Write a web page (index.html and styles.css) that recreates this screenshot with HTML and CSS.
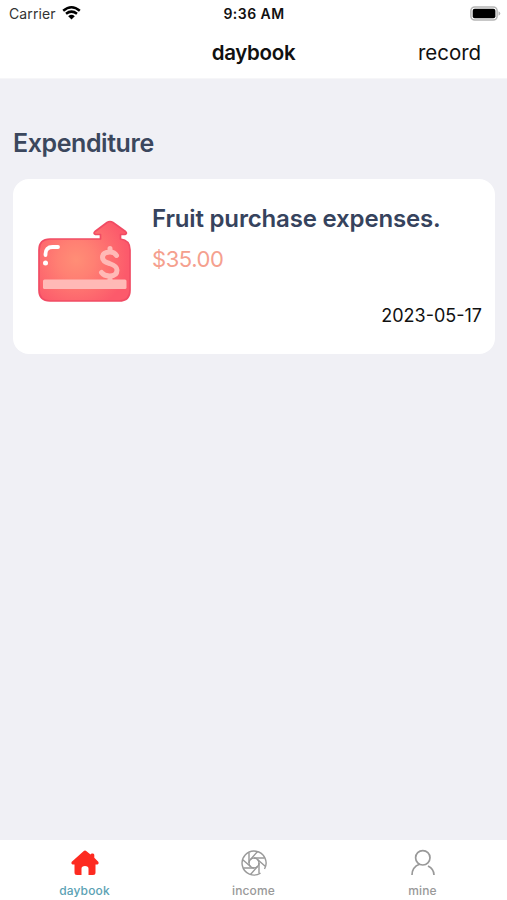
FILE: index.html
```html
<!DOCTYPE html>
<html lang="en">
<head>
<meta charset="utf-8">
<title>daybook</title>
<link rel="stylesheet" href="styles.css">
</head>
<body>
<div class="app">
  <header class="header">
    <div class="status">
      <div class="carrier"><span>Carrier</span>
        <svg width="19" height="15" viewBox="0 0 19 15"><path d="M1.200 5.700Q9.500-1.300 17.800 5.700M4 8.800Q9.500 4.500 15 8.800" fill="none" stroke="#000" stroke-width="2.500"/><path d="M6.200 11.200Q9.500 8.500 12.800 11.200L9.500 14.500Z"/></svg>
      </div>
      <div class="time">9:36 AM</div>
      <svg class="battery" width="31" height="15" viewBox="0 0 31 15"><rect x=".9" y=".9" width="26.2" height="13.2" rx="3.8" fill="#fff" stroke="#b5b5b5" stroke-width="1.5"/><rect x="2.7" y="2.8" width="22.7" height="9.5" rx="2"/><path d="M28.5 5.2Q30.3 6 30.3 7.5T28.5 9.8Z" fill="#b5b5b5"/></svg>
    </div>
    <nav class="nav">
      <h1 class="title">daybook</h1>
      <a class="record">record</a>
    </nav>
  </header>
  <main class="main">
    <h2 class="section">Expenditure</h2>
    <article class="card">
      <svg class="card-icon" width="94" height="84" viewBox="0 0 94 84">
        <defs>
          <radialGradient id="glow" gradientUnits="userSpaceOnUse" cx="38" cy="40" r="52"><stop offset="0" stop-color="#ff8e76"/><stop offset=".35" stop-color="#ff8073"/><stop offset="1" stop-color="#fc5a6b"/></radialGradient>
        </defs>
        <path d="M12 19H62.500V14.500H57.500Q55 13.500 57 11.500L69 2.500Q72 .500 75 2.500L87.500 11.500Q89.500 13.500 87 14.500H82.500V19Q92 20 92 30V70Q92 81 81 81H12Q1 81 1 70V30Q1 19 12 19Z" fill="url(#glow)" stroke="#f14c64" stroke-width="1.700" stroke-linejoin="round"/>
        <path d="M7.500 35V34Q7.500 27 14.500 27H20" fill="none" stroke="#fff" stroke-width="3.800" stroke-linecap="round"/>
        <circle cx="7.500" cy="43" r="2.500" fill="#fff"/>
        <rect x="5" y="59.500" width="83.500" height="9.500" rx="1.500" fill="#ffb9b6"/>
        <path d="M78.500 35.500Q76.500 32 72 32Q64.500 32 64.500 37.500Q64.500 41.500 71.500 43.500Q79 46 79 50Q79 56 71.500 56Q66 56 63.500 52.500M72 28.500V32M72 56V61" fill="none" stroke="#ffb9b6" stroke-width="5" stroke-linecap="round"/>
      </svg>
      <div class="details">
        <h3 class="name">Fruit purchase expenses.</h3>
        <p class="amount">$35.00</p>
        <time class="date">2023-05-17</time>
      </div>
    </article>
  </main>
  <footer class="tabs">
    <a class="tab active">
      <svg width="28" height="28" viewBox="0 0 28 28"><path d="M12.500 2.200Q14 1 15.500 2.200L19.500 5.500Q20 4.500 21 4.500H22Q23.300 4.500 23.300 6V8.800L27.500 13Q28 15 26.500 15.500H24.500V23.500Q24.500 26 22 26H17.500V19.500Q17.500 17 14 17T10.500 19.500V26H6Q3.500 26 3.500 23.500V15.500H1.500Q0 15 .500 13Z" fill="#fd2a20"/></svg>
      <span>daybook</span>
    </a>
    <a class="tab">
      <svg width="28" height="28" viewBox="0 0 28 28" fill="none" stroke="#999" stroke-width="1.400"><path d="M24.500 20A12 12 0 1 0 20.500 24.200"/><circle cx="14" cy="14" r="5"/><path d="M9 14V4M10.500 10.500 17.500 2.500M14 9H24.500M17.500 10.500 25.500 17.500M19 14V24M17.500 17.500 10.500 25.500M14 19H3.500M10.500 17.500 2.500 10.500"/></svg>
      <span>income</span>
    </a>
    <a class="tab">
      <svg width="28" height="28" viewBox="0 0 28 28" fill="none" stroke="#999" stroke-width="1.700"><circle cx="13.800" cy="8.800" r="7.200"/><path d="M10.500 15.200Q3 18 3 26M19 17Q25 20 25 26"/></svg>
      <span>mine</span>
    </a>
  </footer>
</div>
</body>
</html>
```
FILE: styles.css
```css
* { box-sizing: border-box; }
body, h1, h2, h3, p { margin: 0; }
body { font-family: Inter, "Liberation Sans", sans-serif; color: #111; }
svg { display: block; flex: none; }
.app { height: 900px; display: flex; flex-direction: column; background: #f0f0f5; }
.header { height: 79px; background: #fff; border-bottom: 1px solid #f6f6f8; }
.status { height: 27px; padding: 0 6px 0 9px; display: grid; grid-template-columns: 1fr auto 1fr; align-items: center; font-size: 14px; line-height: 27px; }
.carrier { display: flex; align-items: center; gap: 6px; color: #333; letter-spacing: .1px; }
.carrier svg { margin-top: -2px; }
.time { margin-right: 2px; font-weight: 600; letter-spacing: .45px; }
.battery { justify-self: end; }
.nav { height: 51px; padding: 0 26px; display: grid; grid-template-columns: 1fr auto 1fr; align-items: center; }
.title { grid-column: 2; font-size: 20.5px; font-weight: 600; line-height: 51px; letter-spacing: -.3px; }
.record { justify-self: end; font-size: 20.5px; letter-spacing: -.05px; }
.main { flex: 1; padding: 48px 12px 0 13px; }
.section { font-size: 25px; font-weight: 600; line-height: 32px; letter-spacing: -.43px; color: #3b475d; }
.card { height: 175px; margin-top: 20px; padding: 24px 13px 0 25px; display: flex; align-items: flex-start; gap: 20px; background: #fff; border-radius: 16px; }
.card-icon { margin-top: 17px; }
.details { flex: 1; display: flex; flex-direction: column; }
.name { font-size: 24px; font-weight: 600; line-height: 32px; letter-spacing: -.17px; color: #36435d; white-space: nowrap; }
.amount { margin-top: 8px; font-size: 22px; line-height: 32px; letter-spacing: -.45px; color: #f5a08e; }
.date { margin-top: 28px; align-self: flex-end; font-size: 18px; line-height: 25px; }
.tabs { height: 60px; padding-top: 9px; display: grid; grid-template-columns: repeat(3, 1fr); background: #fff; }
.tab { display: flex; flex-direction: column; align-items: center; font-size: 12px; font-weight: 500; line-height: 16px; letter-spacing: .15px; color: #999; gap: 6px; }
.active { color: #5ba2b4; }
```
